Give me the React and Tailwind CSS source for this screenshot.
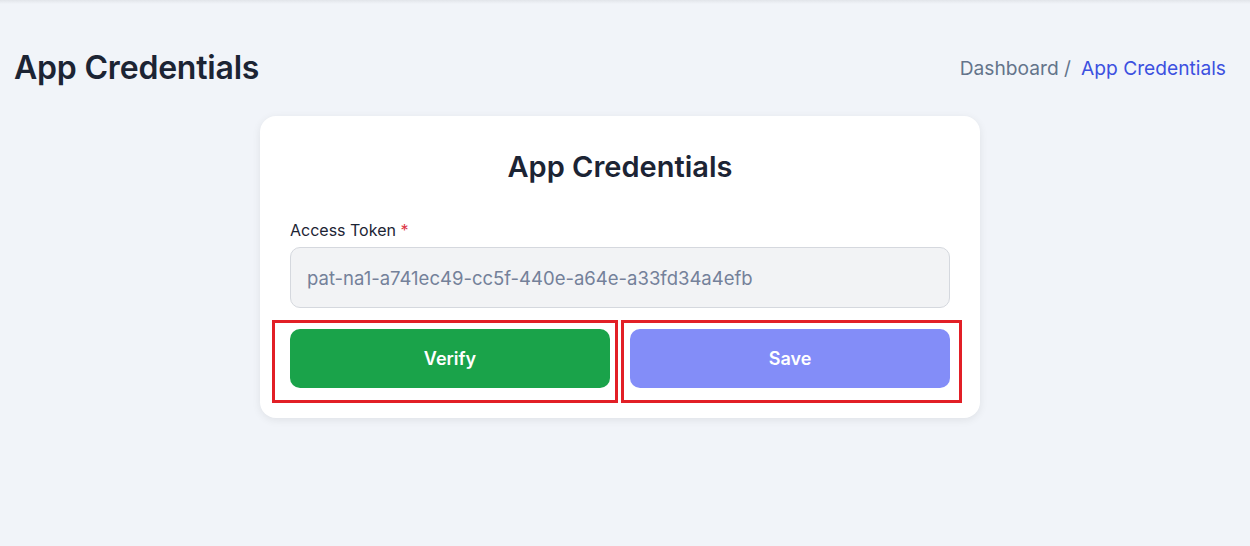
import React, { useState } from "react";

const App = () => {
  const [token, setToken] = useState("pat-na1-a741ec49-cc5f-440e-a64e-a33fd34a4efb");

  return (
    <div
      className="min-h-screen w-full bg-[#f1f4f9] text-[#1c2434]"
      style={{ fontFamily: "Inter, 'Noto Sans', sans-serif" }}
    >
      {/* top shadow under header */}
      <div className="h-[4px] w-full bg-gradient-to-b from-[#e2e5ea] to-transparent" />

      {/* Page header */}
      <div className="flex items-center justify-between pl-[14px] pr-[24px] pt-[44px]">
        <h1 className="text-[32px] font-semibold leading-[40px] tracking-[-0.2px]">
          App Credentials
        </h1>
        <div className="flex items-center gap-[10px] text-[19.2px]">
          <span className="text-[#64748b]">Dashboard /</span>
          <span className="text-[#3c50e0]">App Credentials</span>
        </div>
      </div>

      {/* Card */}
      <div className="flex justify-center pr-[10px] pt-[28px]">
        <div className="w-[720px] rounded-[16px] bg-white px-[30px] pt-[33px] pb-[30px] shadow-[0_2px_8px_rgba(0,0,0,0.08)]">
          <h2 className="text-center text-[29px] font-semibold leading-[36px]">
            App Credentials
          </h2>

          <div className="mt-[35px]">
            <label className="block text-[16px] leading-[20px] text-[#1c2434]">
              Access Token <span className="text-[#dc3545]">*</span>
            </label>
            <input
              type="text"
              value={token}
              onChange={(e) => setToken(e.target.value)}
              className="mt-[7px] h-[61px] w-full rounded-[10px] border border-[#d5d8de] bg-[#f2f3f5] px-[16px] text-[18.5px] text-[#74819a] outline-none"
            />
          </div>

          <div className="relative mt-[21px] flex gap-[20px]">
            <button className="h-[59px] flex-1 rounded-[10px] bg-[#1aa34a] text-[18px] font-semibold text-white">
              Verify
            </button>
            <button className="h-[59px] flex-1 rounded-[10px] bg-[#838df8] text-[18px] font-semibold text-white">
              Save
            </button>

            {/* annotation boxes */}
            <div className="pointer-events-none absolute left-[-18px] top-[-9px] h-[83px] w-[346px] border-[3px] border-[#e21f26]" />
            <div className="pointer-events-none absolute left-[331px] top-[-9px] h-[83px] w-[341px] border-[3px] border-[#e21f26]" />
          </div>
        </div>
      </div>
    </div>
  );
};

export default App;
